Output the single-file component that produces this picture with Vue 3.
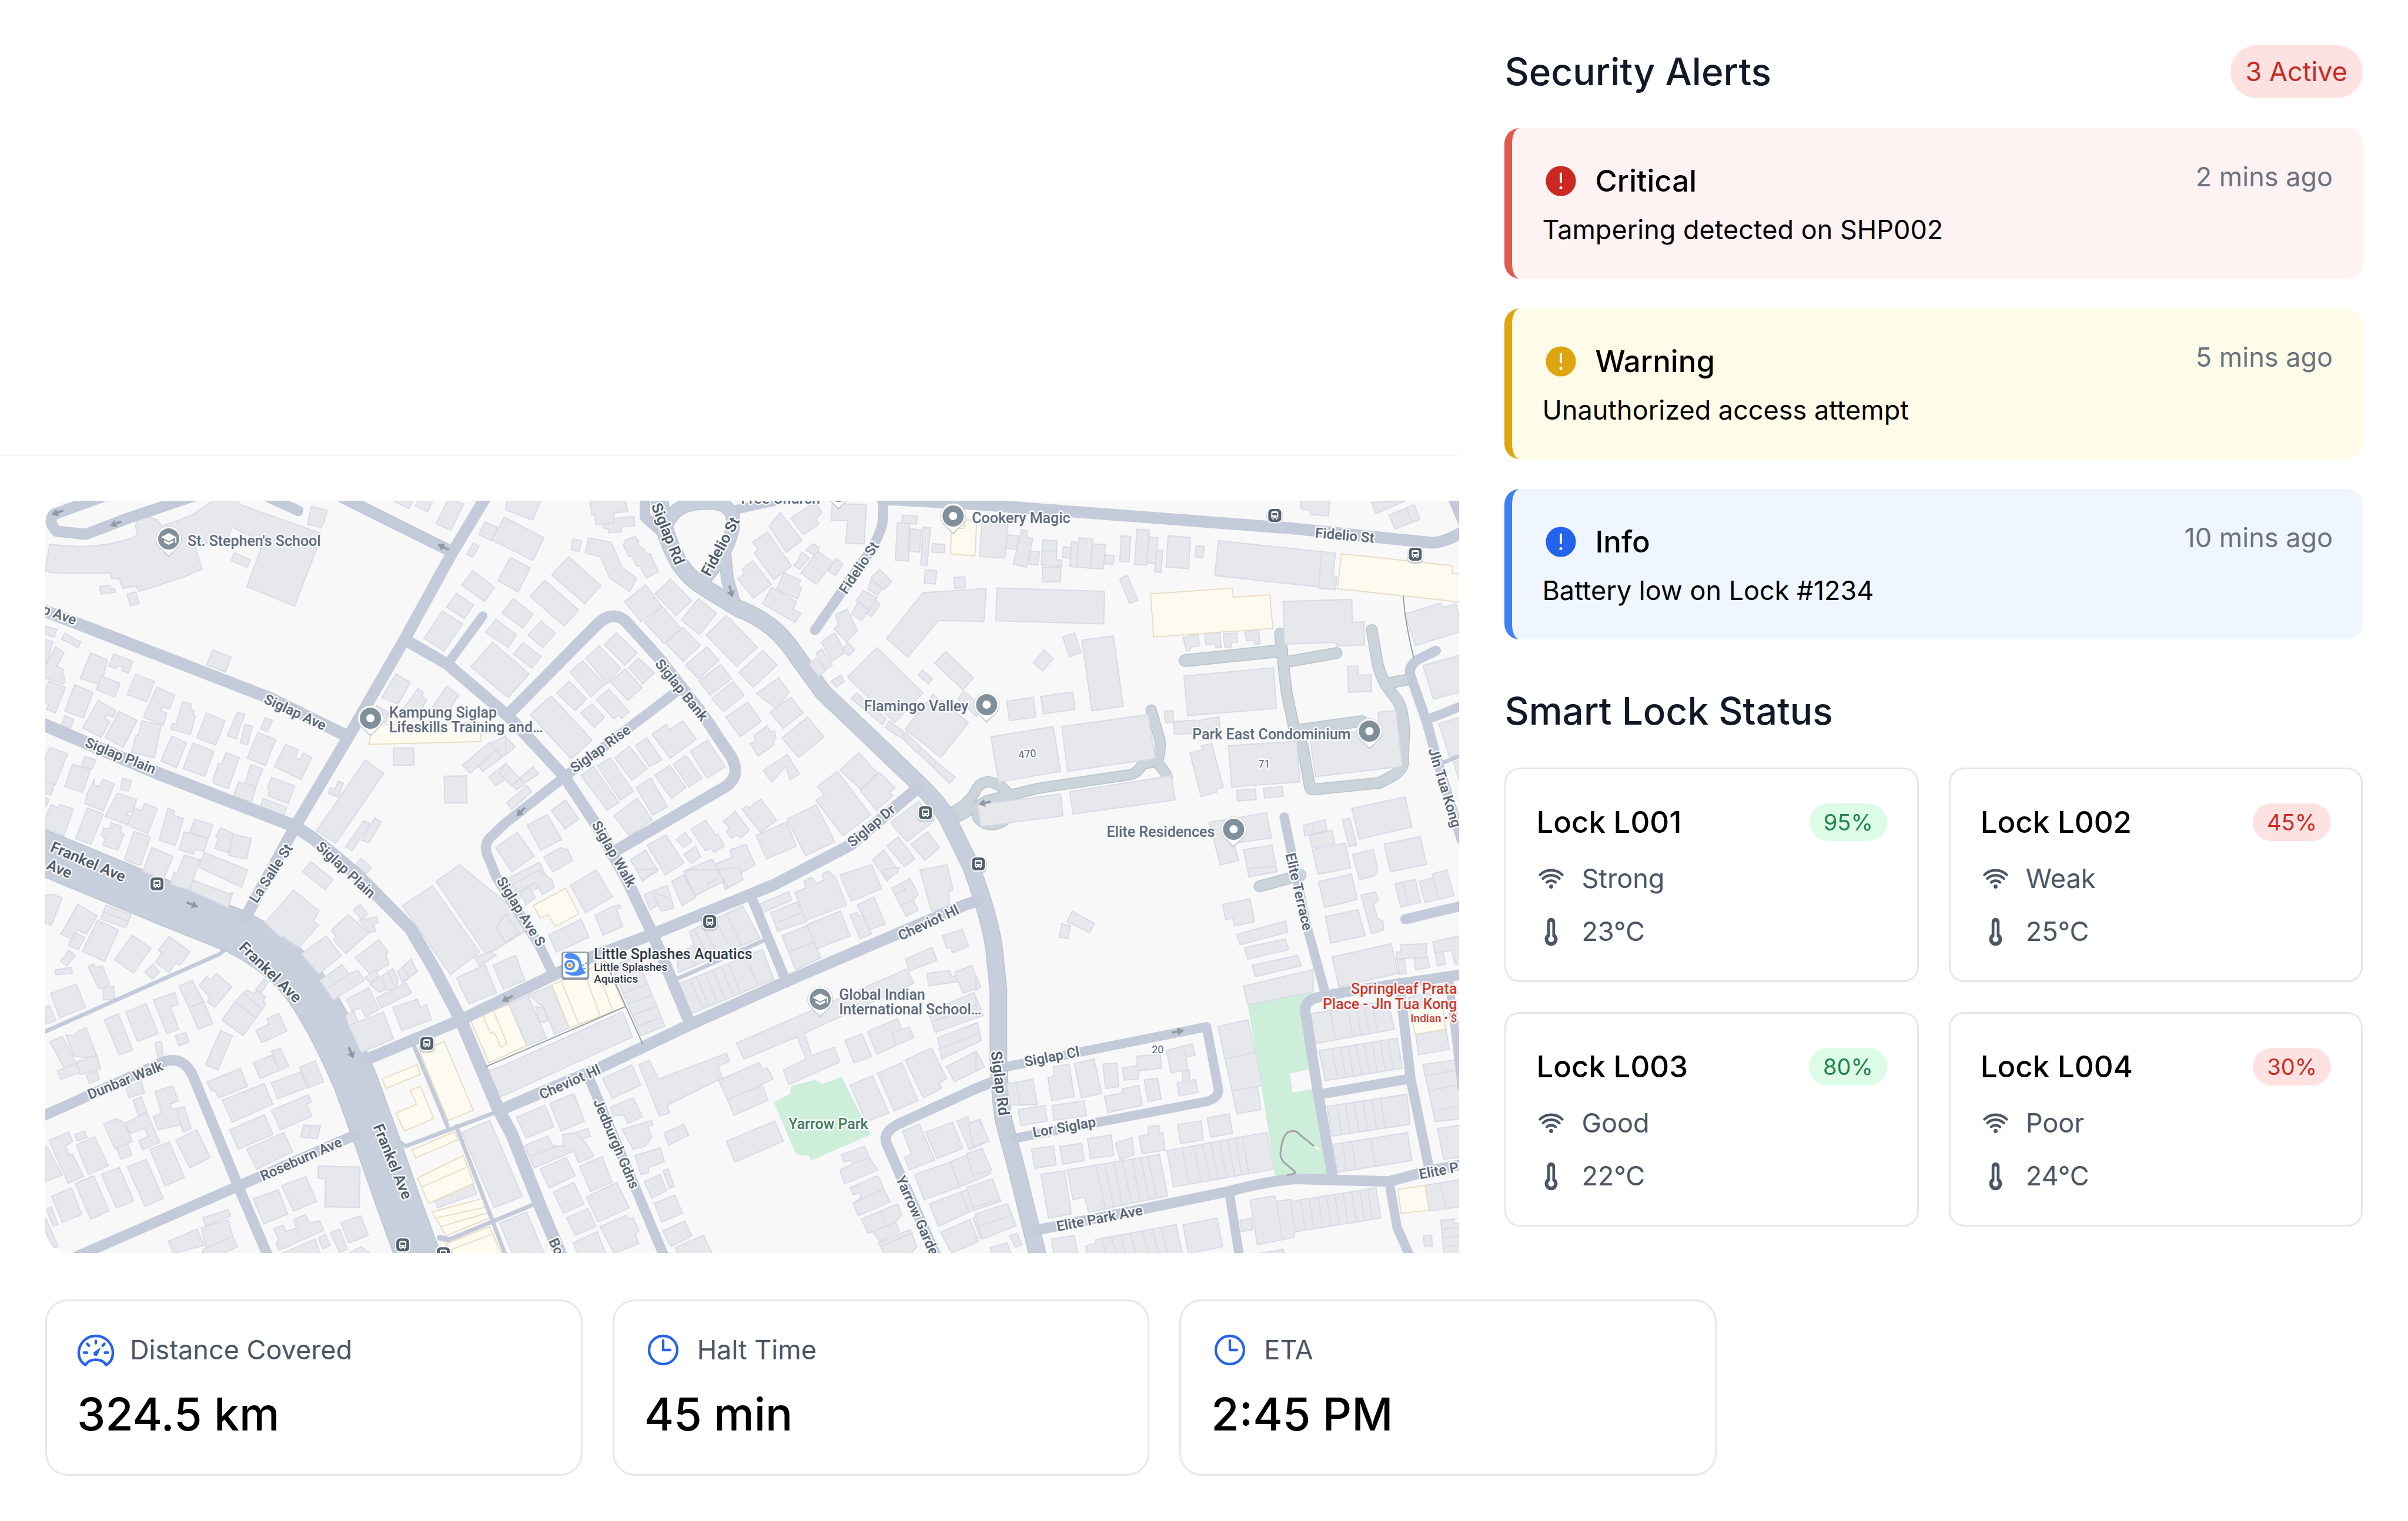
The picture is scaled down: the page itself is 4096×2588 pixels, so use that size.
<script setup>
const alerts = [
  { level: 'critical', title: 'Critical', message: 'Tampering detected on SHP002', time: '2 mins ago' },
  { level: 'warning', title: 'Warning', message: 'Unauthorized access attempt', time: '5 mins ago' },
  { level: 'info', title: 'Info', message: 'Battery low on Lock #1234', time: '10 mins ago' },
]

const locks = [
  { name: 'Lock L001', battery: 95, signal: 'Strong', temp: '23°C' },
  { name: 'Lock L002', battery: 45, signal: 'Weak', temp: '25°C' },
  { name: 'Lock L003', battery: 80, signal: 'Good', temp: '22°C' },
  { name: 'Lock L004', battery: 30, signal: 'Poor', temp: '24°C' },
]

const stats = [
  { icon: 'gauge', label: 'Distance Covered', value: '324.5 km' },
  { icon: 'clock', label: 'Halt Time', value: '45 min' },
  { icon: 'clock', label: 'ETA', value: '2:45 PM' },
]

// Footprints are stored per survey sheet; every sheet has its own 1568-unit grid.
const list = (s) => s.split(';').map((p) => p.trim()).filter(Boolean)
const sheets = [
  {
    x: 60, y: 840, w: 820, h: 660,
    blocks: list(`47,205 150,215 235,205 315,180 333,165 326,130 335,100 365,92 395,105 411,130 465,108 515,82 578,28 655,28 668,45 928,160 917,217 843,455 688,375 735,218 700,170 640,136 630,170 520,215 543,305 480,338 338,395 328,373 284,383 274,344 247,342 245,321 90,322 47,318 33,312;
209,376 243,370 246,385 258,383 261,398 213,406; 299,405 327,397 337,443 309,453; 648,239 700,267 689,298 637,270; 898,52 948,66 940,115 935,118 930,137 885,124; 578,632 638,661 618,720 557,692;
33,536 70,548 61,579 33,570; 95,564 148,600 139,621 86,588; 33,590 57,598 42,670 33,690; 66,619 94,643 70,697 92,712 88,733 96,741 92,770 33,745 33,700; 180,644 235,671 214,773 146,747; 255,647 317,678 303,726 281,715 285,702 268,694 263,707 239,696; 216,737 276,766 258,822 198,792; 326,729 387,759 363,841 299,812; 45,757 98,783 65,886 38,872 43,852 33,848 33,790; 128,773 188,803 157,906 96,878; 395,782 454,814 437,870 412,862 410,878 427,888 417,935 352,903; 205,835 263,878 254,904 231,892 226,908 243,920 214,985 154,947; 98,898 126,912 114,947 84,934; 273,880 331,917 286,1025 227,985; 347,918 410,934 387,1068 313,1045 327,978 335,977; 480,841 507,851 505,870 518,880 513,894 521,899 504,973 440,951 447,928 457,932; 557,887 617,918 587,1016 525,986; 657,882 681,893 653,991 625,978; 681,933 705,940 691,1014 667,1007; 748,905 771,917 754,963 733,951; 724,965 782,994 748,1099 689,1069; 443,980 492,1008 459,1106 408,1081; 513,1008 581,1041 551,1143 481,1111; 620,1047 663,1066 628,1192 583,1173 577,1155 597,1090 607,1092; 701,1095 740,1113 717,1186 683,1168; 662,1163 717,1186 704,1246 644,1222; 814,1014 855,1035 846,1066 861,1075 872,1049 899,1065 865,1155 777,1103; 768,1147 844,1182 822,1252 757,1222 761,1195 755,1188; 741,1232 817,1268 806,1307 730,1273;
48,1026 105,1052 65,1175 33,1162 33,1060; 33,1162 62,1175 51,1219 33,1210; 161,1062 196,1076 186,1113 151,1102; 121,1094 180,1115 154,1207 96,1184; 194,1150 190,1178 210,1183 220,1153 257,1175 221,1283 160,1252 170,1220 167,1217; 283,1151 312,1159 304,1202 277,1194; 267,1210 330,1237 316,1285 298,1287 298,1300 312,1305 300,1338 227,1305; 355,1252 397,1273 366,1374 300,1340 322,1270 345,1280; 33,1228 45,1235 33,1270; 52,1256 75,1271 79,1255 124,1275 93,1382 33,1350 33,1310; 170,1270 221,1296 181,1417 131,1393; 247,1330 281,1345 278,1370 289,1376 268,1442 220,1420 228,1395 215,1380 222,1352 241,1355; 431,1272 452,1282 449,1300 482,1313 455,1422 403,1400; 518,1315 578,1340 562,1393 503,1368; 484,1367 562,1393 549,1445 519,1437 514,1457 468,1438; 602,1350 645,1374 627,1451 583,1433 597,1391 587,1385; 645,1377 703,1393 687,1477 630,1463; 321,1365 375,1388 342,1503 290,1480; 379,1430 448,1467 415,1560 350,1525; 550,1450 690,1520 671,1590 532,1510; 485,1460 537,1480 500,1600 440,1580 452,1530 462,1530;
1163,28 1228,28 1215,60; 1247,28 1293,28 1276,72 1235,48; 1345,20 1393,42 1352,148 1303,122; 1461,115 1503,135 1485,190 1442,166; 1425,200 1443,213 1422,257 1403,243; 1422,312 1494,378 1461,435 1387,370; 1369,403 1425,450 1395,505 1338,458; 1324,474 1390,527 1329,637 1264,585; 1498,508 1565,570 1538,621 1464,560; 1487,601 1606,728 1538,824 1417,700; 1173,729 1220,763 1180,850 1127,825; 1245,788 1262,803 1257,818 1274,833 1250,880 1200,865; 1338,779 1378,813 1340,885 1292,862; 1110,855 1150,885 1140,925 1105,910;
1073,1077 1133,1130 977,1413 915,1363; 985,1162 1002,1170 985,1225 953,1212 960,1188 975,1192; 1165,1028 1230,1028 1232,1097 1166,1098; 1330,1142 1403,1140 1404,1250 1331,1250; 1477,1005 1500,1035 1414,1130 1389,1098; 1525,982 1560,1020 1518,1066 1480,1010; 1500,1035 1518,1066 1455,1122 1442,1100; 1475,1145 1530,1090 1560,1130 1497,1180; 1068,1323 1089,1333 1030,1443 1009,1425; 1104,1311 1125,1327 1085,1411 1062,1400; 895,1486 968,1560 942,1600 870,1528; 1060,1475 1094,1512 1075,1535 1042,1500; 1497,1430 1568,1370 1620,1460 1550,1527`),
    shops: list(`1095,935 1449,925 1449,1002 1085,1013`),
    walls: '',
  },
  {
    x: 860, y: 840, w: 820, h: 660,
    blocks: list(`5,28 115,28 88,107 0,65; -5,95 125,178 88,270 -45,187; 15,257 80,300 40,397 -25,352; 205,255 310,372 257,445 150,328; 127,350 237,470 190,535 80,415; 25,424 89,487 55,543 -12,482; 115,514 162,565 121,622 73,572; 57,602 115,658 86,705 25,648;
275,30 390,28 397,72 352,77 353,120 293,126 290,85 280,84; 317,124 350,120 352,100 417,92 420,130 376,135 377,153 335,158 333,143 318,140; 220,183 247,192 238,236 212,226; 269,179 343,196 378,297 426,342 403,395 339,342 308,254 259,240; 420,174 433,192 430,208 450,225 455,243 470,243 496,316 457,340 436,292 427,294 412,255 400,252 383,208 388,188; 455,368 507,455 440,517 387,437; 536,345 605,433 553,492 486,405; 510,457 570,545 515,605 451,519; 627,424 686,483 630,569 571,511; 577,541 633,613 577,678 521,604; 718,492 818,620 752,698 652,572; 655,619 693,673 627,748 584,693; 837,634 883,692 805,783 758,723; 700,690 735,748 665,814 628,757; 740,759 775,815 708,880 670,828; 888,744 922,803 879,868 815,808; 788,842 831,920 763,982 716,904; 927,822 967,885 903,948 860,884; 981,903 1035,983 953,1067 899,988; 851,938 860,962 875,960 879,990 870,998 873,1015 821,1060 795,1010 812,1002 808,975; 916,1055 955,1133 925,1156 912,1102 865,1165 838,1118;
360,562 427,643 387,694 321,611; 304,616 374,704 330,767 260,665; 432,665 484,725 445,768 400,703; 250,676 323,770 278,821 209,720; 389,708 443,784 398,835 341,760; 207,758 263,830 226,877 166,805; 336,790 402,881 378,908 367,895 353,911 294,833; 280,850 321,903 288,945 244,885; 148,817 281,996 213,1072 80,893;
576,918 620,993 535,1070 476,972 522,933 533,955; 657,996 714,1103 655,1150 600,1042; 459,987 508,1075 467,1103 422,1018; 403,1021 460,1112 410,1159 355,1067; 586,1058 638,1149 595,1185 545,1093; 533,1097 586,1188 539,1232 485,1138; 341,1067 415,1203 373,1238 298,1100; 286,1102 368,1248 330,1279 245,1140; 472,1149 526,1265 479,1300 424,1187; 428,1231 477,1318 402,1382 352,1303;
89,1104 107,1133 60,1170 47,1148; 0,1090 45,1150 20,1182 -20,1130; 0,980 30,1025 0,1055; 70,1180 84,1206 20,1275 3,1250; 45,1152 62,1175 35,1196 22,1180; 195,1238 238,1315 193,1355 148,1280; 135,1297 182,1398 114,1441 70,1340; 37,1369 93,1465 20,1527 -33,1430; 180,1429 195,1440 201,1436 217,1483 154,1529 124,1468; 110,1490 140,1568 40,1640 0,1560;
893,76 964,188 912,237 857,130; 1012,45 1028,76 1008,102 1020,122 968,165 927,98 990,48; 851,155 930,293 872,347 808,240 820,225 804,195; 803,271 864,367 806,422 755,345 777,320 769,305; 1001,202 1020,220 1007,250 975,228; 963,235 987,260 955,305 938,290 952,265; 1015,233 1065,278 1010,367 960,320; 1075,262 1097,283 1073,331 1048,312; 905,320 960,350 950,372 962,380 950,425 880,387; 865,378 946,437 934,468 960,483 941,520 835,445; 1062,40 1173,44 1166,203 1106,200 1112,110 1058,107; 1290,87 1338,90 1336,123 1288,120; 1274,117 1313,122 1310,273 1267,269; 1315,142 1351,146 1346,236 1313,232; 1357,136 1382,139 1370,292 1350,288; 1388,202 1428,206 1427,239 1386,236; 1365,307 1402,311 1397,365 1361,361; 1458,339 1493,335 1495,381 1460,383; 1216,305 1255,354 1230,388 1187,340; 1188,350 1223,385 1209,412 1177,385; 1164,392 1208,420 1185,465 1140,430; 1205,430 1218,447 1190,496 1175,485; 1145,440 1180,470 1158,513 1125,487; 1111,467 1144,555 1108,600 1068,545 1083,530 1072,490; 1070,562 1105,640 1060,678 1027,600; 1113,602 1135,630 1115,655 1095,632; 1028,628 1062,695 1040,710 1009,645; 1010,665 1040,715 1018,738 987,690; 1090,733 1101,758 1075,782 1058,757; 1357,400 1563,383 1555,516 1407,513 1307,661 1239,585; 1207,622 1357,805 1265,925 1112,741; 1431,638 1521,745 1487,793 1395,685; 1355,713 1388,747 1375,768 1341,733; 1488,798 1550,860 1530,900 1472,830; 1142,805 1237,910 1225,933 1123,828; 1390,811 1505,925 1415,1066 1299,952; 1247,918 1297,965 1285,987 1234,945; 1302,967 1350,1025 1338,1048 1287,985; 1352,1027 1402,1085 1390,1105 1338,1045; 1402,1085 1461,1145 1443,1171 1388,1103;
1149,1048 1209,1130 1155,1195 1087,1117; 1216,1127 1266,1188 1247,1210 1260,1220 1205,1280 1153,1200; 1079,1122 1186,1298 1097,1383 1009,1240 1036,1217 1014,1183; 1343,1243 1395,1320 1305,1407 1252,1330; 1010,1258 1070,1407 975,1463 915,1315; 914,1327 945,1425 848,1477 814,1382; 830,1234 881,1320 829,1369 768,1275 783,1262 790,1270; 746,1283 792,1360 767,1390 750,1380 735,1394 718,1365 728,1352 707,1325; 650,1320 684,1382 690,1375 711,1423 678,1450 667,1434 650,1443 603,1357; 584,1370 606,1406 580,1430 555,1398; 618,1425 634,1466 604,1495 579,1458; 521,1380 580,1493 519,1540 460,1420; 455,1441 495,1525 448,1561 405,1480; 781,1417 811,1500 763,1535 771,1560 715,1600 682,1497 734,1470 730,1440; 672,1477 710,1568 620,1620 580,1525; 1372,1367 1411,1430 1363,1481 1318,1417; 1277,1388 1331,1475 1297,1508 1240,1423; 1230,1440 1275,1522 1240,1565 1193,1480`),
    shops: list(`1450,140 1490,140 1495,105 1532,108 1526,252 1447,243`),
    walls: '',
  },
  {
    x: 1660, y: 840, w: 840, h: 660,
    blocks: list(`18,120 100,125 92,260 11,254; 100,166 134,171 128,226 95,220; 145,145 163,150 160,175 180,182 160,297 118,285; 173,231 201,235 196,289 168,284; 212,186 257,191 255,267 273,269 272,294 207,287; 211,296 269,298 268,357 210,356; 277,214 301,218 298,260 274,257; 303,194 326,197 320,297 298,294; 327,178 371,184 363,302 319,295; 371,203 411,206 404,305 363,301; 411,247 439,251 435,286 406,283; 461,170 491,174 485,276 456,273; 511,143 550,147 541,289 503,285; 550,174 577,178 570,284 541,280; 574,228 593,231 587,319 567,316; 610,170 680,177 675,303 603,297; 699,209 725,214 719,260 695,253; 769,190 1141,240 1133,332 1146,335 1140,388 1087,382 1088,377 758,331; 66,381 408,395 405,526 63,514; 480,331 513,430 487,443 456,345; 313,563 333,642 297,659 275,580; 336,592 436,575 467,859 368,878; 217,633 245,667 212,716 181,682; 97,839 182,823 190,903 106,917; 205,820 307,802 314,872 214,890; 272,941 547,893 568,1070 291,1122; 47,983 245,941 268,1122 72,1166; 298,1205 620,1140 632,1238 307,1295; 5,1257 268,1214 276,1302 16,1345; 657,580 705,570 709,614 681,620 679,634 668,636; 725,567 774,560 778,620 762,624 757,606 730,610; 785,567 829,563 831,599 808,603 811,619 790,621; 852,560 897,550 902,607 885,608 882,592 859,594; 975,436 1193,427 1194,520 1231,518 1233,611 1145,616 1144,601 980,608; 1179,698 1212,697 1213,734 1254,731 1256,799 1183,803; 660,737 944,704 954,868 672,897; 598,879 625,877 627,923 601,925; 628,921 698,915 700,968 630,973; 704,917 770,902 776,960 712,970; 679,1048 720,1034 715,1020 748,1010 785,1187 763,1195 765,1206 714,1224; 801,1019 1018,1001 1028,1165 812,1185; 827,1199 887,1193 889,1236 830,1242; 913,1191 972,1185 976,1223 916,1230; 1060,985 1280,950 1276,884 1333,876 1353,1102 1078,1144; 740,1328 922,1290 938,1392 818,1412 834,1482 775,1501; 849,1439 940,1420 955,1528 866,1548; 1030,28 1124,28 1118,90 1061,84 1062,66 1031,61; 1255,35 1365,28 1269,80; 1311,86 1391,45 1409,104 1330,143; 1361,487 1476,442 1482,460 1523,444 1545,555 1395,614; 1419,694 1545,650 1545,798 1452,831; 1469,930 1545,900 1545,1055 1503,1063; 1515,1085 1545,1075 1545,1200; 1193,1272 1362,1226 1384,1347 1216,1396; 1295,1417 1410,1385 1430,1498 1316,1528; 1195,1458 1262,1438 1275,1520 1265,1545 1217,1560; 1163,1318 1187,1311 1208,1420 1184,1427; 1039,1340 1108,1318 1115,1360 1044,1384; 1058,1382 1130,1360 1139,1412 1067,1431; 1068,1437 1173,1412 1188,1513 1085,1538`),
    shops: list(`554,405 813,382 817,418 933,409 942,545 564,579; 1160,243 1513,291 1511,322 1545,325 1545,439 1147,384`),
    walls: 'M1098,236 1087,380M1366,60 1384,117M1068,1330 1075,1375M212,231 257,231',
  },
  {
    x: 60, y: 1480, w: 820, h: 670,
    blocks: list(`33,100 60,98 87,113 52,220 33,212; 138,137 201,183 167,255 135,240 125,278 82,255 97,228; 130,250 161,270 140,317 107,300; 203,200 271,240 225,364 153,325; 230,140 311,178 295,230 213,196; 110,320 130,340 103,382 82,363; 65,398 118,388 120,411 66,418; 315,261 377,311 319,410 258,358; 435,265 503,325 471,380 457,370 435,408 391,367 412,330 400,320; 382,375 405,407 380,435 357,407; 172,385 190,375 196,390 218,382 243,457 207,474; 220,470 255,465 259,515 222,518; 50,492 134,455 163,548 79,589; 33,545 45,540 67,600 33,615; 225,597 270,573 317,718 273,737; 294,565 361,533 400,652 332,683; 384,518 454,488 466,535 440,547 467,635 428,652; 467,463 510,440 548,525 500,548; 500,548 548,525 577,612 530,635; 533,460 557,425 570,437 590,412 639,467 583,547 560,525 569,510; 745,435 757,447 735,490 717,475; 650,525 676,490 690,478 710,495 720,480 748,505 742,525 750,535 676,660 607,598; 792,571 818,642 736,688 717,638 760,615 753,593; 603,640 641,661 593,798 553,775; 455,660 489,647 500,686 467,700; 389,687 411,683 416,744 398,748; 48,685 88,662 133,770 93,787; 100,657 125,660 142,640 165,628 200,740 157,748 125,740; 133,765 200,740 212,790 145,815; 72,800 133,770 145,805 83,834; 165,815 200,800 208,835 175,850; 708,768 768,738 795,798 731,831; 768,722 797,710 824,782 795,798; 558,845 667,790 690,862 597,908 583,877 572,880; 768,848 862,805 887,865 788,911; 860,785 910,760 937,843 887,867; 608,917 745,851 772,933 641,1004; 768,957 888,895 898,925 882,933 900,980 797,1035; 632,1035 745,975 773,1054 660,1112; 687,1112 808,1045 837,1122 720,1192; 872,1016 928,1020 917,1070 864,1064; 295,870 345,840 355,888 305,907; 318,918 345,903 363,965 335,978; 363,965 405,1085 350,1115 337,1078 367,1062 355,1028 310,1050 290,1010; 389,882 447,860 465,920 438,932 445,955 458,950 472,1015 400,1035 383,983 410,968; 458,950 485,942 507,1030 480,1043; 222,1012 265,990 292,1010 315,1080 260,1112; 265,1105 300,1090 314,1135 278,1152; 44,1077 108,1044 122,1080 97,1100 110,1135 120,1130 157,1220 107,1248; 127,1055 160,1040 168,1065 137,1080; 133,1095 193,1063 238,1178 172,1213; 33,1105 40,1105 88,1215 33,1240; 373,1113 436,1083 485,1225 422,1258; 457,1077 525,1034 569,1145 503,1186; 300,1183 361,1153 416,1307 357,1340; 215,1213 273,1185 320,1317 264,1347; 130,1248 190,1218 240,1358 180,1390; 53,1299 118,1267 151,1372 88,1403; 37,1352 52,1343 75,1412 57,1418; 33,1385 75,1500 60,1505 33,1440; 921,1179 1056,1183 1054,1344 942,1341 944,1230 920,1228; 801,1257 880,1221 915,1320 840,1358; 709,1310 790,1273 821,1370 744,1409; 545,1385 628,1352 635,1378 553,1420; 540,1425 628,1392 642,1460 555,1505; 545,1512 642,1460 658,1500 610,1528 545,1528; 433,1478 527,1431 548,1495 450,1528; 840,1392 878,1373 892,1405 925,1397 938,1435 793,1515 784,1490 792,1470 775,1430 806,1415 815,1440 850,1425; 920,1465 944,1452 958,1495 935,1508; 960,1445 990,1430 1015,1510 990,1524; 993,1405 1058,1377 1083,1455 1020,1486; 800,1528 910,1470 925,1528; 1020,1528 1060,1500 1090,1528;
840,81 923,163 905,205 922,220 857,308 805,265 800,270 747,210; 515,42 630,95 642,90 628,150 500,80; 1056,138 1081,175 1062,197 1034,160; 1018,179 1085,250 1010,334 970,280 978,265 963,240; 1053,200 1110,186 1116,210 1100,217 1107,245 1090,250; 947,263 995,342 922,415 865,335; 1117,278 1147,325 1140,340 1150,375 1092,420 1040,350; 998,377 1020,415 1050,400 1070,440 970,517 925,440; 1107,398 1117,422 1090,450 1072,430; 1163,392 1180,435 1170,475 1130,480 1118,487 1088,455; 1178,405 1222,355 1242,405 1195,450; 1205,450 1224,490 1125,550 1110,510; 1085,470 1118,555 1075,587 1060,550 1030,560 1012,515; 1010,580 1035,562 1050,605 1020,620; 1020,620 1132,567 1165,673 1060,727; 1163,548 1242,515 1252,547 1273,537 1288,597 1192,640; 1292,63 1445,328 1350,417 1194,142; 1380,-20 1303,45 1467,340 1600,240 1600,200; 1480,325 1500,340 1445,382 1428,350; 1370,430 1463,378 1500,490 1410,533; 1489,380 1562,340 1592,440 1522,475; 1388,1045 1478,997 1584,1300 1492,1345; 1510,1407 1598,1362 1655,1528 1552,1528; 1300,1320 1420,1240 1435,1290 1310,1345`),
    shops: list(`1415,597 1540,535 1598,700 1475,768; 1250,725 1330,683 1424,957 1342,998; 1128,832 1242,776 1253,814 1140,870; 1173,968 1240,934 1220,878 1253,862 1296,990 1200,1039; 1225,1115 1365,1042 1374,1075 1237,1146; 1243,1227 1392,1138 1427,1247 1280,1328; 1290,1362 1455,1308 1480,1385 1336,1456; 1335,1490 1477,1420 1516,1528 1360,1528`),
    shopWalls: 'M1258,1262 1405,1183M1307,1385 1468,1342M1320,1420 1473,1365M1345,1515 1487,1450M1454,575 1480,650 1492,645 1515,707 1534,690 1490,562',
    walls: 'M222,168 303,205M650,525 716,588M676,490 738,555M890,1068 898,1020M940,480 1020,415M1128,428 1142,480M1145,400 1165,455M1195,385 1215,430',
  },
  {
    x: 860, y: 1480, w: 820, h: 670,
    blocks: list(`210,62 295,0 347,108 260,170; 20,60 110,0 150,40 158,70 120,98 97,50 40,88; 290,180 350,145 370,140 375,150 360,160 381,225 317,260; 140,258 245,197 271,268 165,328; 50,90 75,68 97,110 65,140; 0,175 43,250 0,290 -30,230; 450,98 525,62 535,100 547,152 507,165 495,140 470,158; 540,45 580,20 617,110 573,142; 580,10 600,0 690,0 692,35 655,55 660,75 617,103; 690,0 760,-10 772,40 722,70; 425,0 495,-5 445,45; 827,135 920,87 930,120 838,170; 862,170 950,127 980,205 885,245; 940,90 975,72 970,45 995,30 1010,55 1035,40 1030,15 1050,5 1075,35 1108,140 978,200; 1087,20 1190,-20 1223,75 1123,125; 1225,0 1280,-10 1275,10 1243,35; 1255,72 1315,35 1342,98 1325,120 1342,160 1303,185 1283,140; 1347,0 1435,-20 1455,80 1440,90 1445,145 1385,165; 1143,140 1197,108 1235,215 1185,238; 1120,180 1142,170 1150,185 1162,182 1190,255 1152,273; 898,262 980,222 1025,350 943,397; 980,218 1088,165 1120,262 1012,315; 597,245 770,143 827,272 562,408 555,340 612,300; 560,455 835,317 872,435 605,572; 1420,263 1485,237 1505,305 1453,330 1448,308 1435,312; 1300,355 1387,308 1402,360 1313,403; 1370,412 1445,400 1450,425 1465,422 1468,445 1375,462; 1460,408 1515,380 1543,465 1488,492; 750,690 1303,395 1328,450 972,650 995,740 1068,706 1087,765 920,855 903,797 977,753 948,665 775,753; 1375,565 1523,488 1553,580 1397,647; 1405,668 1535,608 1546,680 1418,753; 1433,783 1530,723 1557,785 1460,843; 1103,680 1158,653 1190,743 1133,768; 1177,643 1275,592 1287,635 1313,625 1328,668 1207,733; 1120,857 1193,820 1246,967 1173,1003; 1210,810 1288,768 1341,918 1263,960; 1300,757 1385,709 1433,830 1410,850 1418,870 1358,908; 433,775 467,758 497,833 718,730 728,762 690,783 705,828 525,937 533,967 500,980; 693,838 825,767 835,795 850,788 870,832 825,860 838,865 853,917 743,977; 315,830 410,777 440,857 347,910; 340,945 415,907 445,983 397,1010 385,975 350,980; 378,1033 475,997 479,1015 463,1022 475,1065 455,1100 415,1112; 420,1137 503,1107 516,1162 465,1185 465,1205 440,1213; 515,1048 580,1013 595,1057 530,1095; 512,1197 528,1190 548,1260 532,1268; 450,1240 503,1213 523,1277 475,1307; 483,1327 550,1295 575,1367 508,1403; 510,1437 583,1398 605,1457 538,1500; 553,1503 643,1455 672,1528 560,1528; 718,1080 875,1000 903,1080 745,1163; 35,985 128,937 157,1023 66,1068; 143,930 222,890 256,1000 180,1040; 185,1053 230,1047 265,1095 287,1140 237,1165 220,1120 92,1187 62,1098 137,1060 155,1100 188,1098; 230,1045 268,1030 275,1060 245,1072; 112,1190 197,1145 226,1217 142,1267; 240,1180 313,1142 347,1243 276,1280; 155,1283 222,1245 254,1330 188,1368; 262,1302 361,1245 402,1345 300,1402; 198,1385 268,1348 293,1420 226,1455; 307,1420 393,1375 398,1390 415,1385 433,1435 422,1450 433,1487 353,1528; 220,1485 298,1440 325,1528 235,1528; 1290,1040 1345,1012 1395,1155 1313,1195 1297,1145 1320,1130; 1366,1045 1453,1005 1487,1108 1403,1150; 1468,1000 1503,982 1510,1005 1543,993 1570,1080 1508,1115; 1330,1213 1447,1162 1475,1263 1360,1313; 1447,1162 1550,1110 1578,1210 1475,1263; 1378,1330 1480,1283 1507,1362 1407,1420; 1480,1283 1580,1235 1610,1320 1507,1362; 1415,1443 1510,1392 1538,1480 1450,1525; 1520,1385 1600,1340 1620,1430 1543,1468; 1092,1133 1168,1100 1182,1145 1210,1195 1102,1250 1087,1195 1130,1170 1125,1155 1100,1162; 1120,1265 1210,1218 1250,1322 1147,1377 1130,1327 1155,1305 1153,1285 1130,1293; 1157,1390 1275,1330 1288,1375 1268,1400 1280,1440 1215,1478 1195,1440 1178,1447; 1212,1485 1315,1432 1337,1500 1318,1528 1232,1528; 345,385 425,345 518,622 440,660; 10,535 72,500 133,670 70,700; 75,497 150,460 205,630 160,655 125,550; 98,545 125,550 137,600 112,610; -55,800 0,775 380,565 413,665 0,895 -25,905`),
    shops: list(`150,458 290,385 320,360 388,545 207,630; 90,142 195,73 238,175 162,225 137,178 112,192`),
    shopWalls: 'M182,447 237,613M265,440 306,578M298,400 347,557',
    walls: 'M612,300 640,370M614,238 662,352M640,225 690,335M680,200 733,312M717,175 768,300M590,310 615,380M600,435 640,550M620,425 660,540M648,410 688,527M673,398 712,515M700,383 740,500M725,372 762,487M782,345 820,460M385,490 460,455M395,535 472,500M410,580 488,545M425,625 503,588M885,210 965,168M920,325 1000,290M482,95 495,140M482,90 530,110M1265,98 1300,80 1283,55M1283,140 1325,120M1390,605 1540,530M1405,715 1540,650M722,915 825,862M80,1140 170,1100M1255,650 1270,695M1255,650 1287,635M1130,1327 1228,1272M1178,1447 1195,1440 1270,1400M1220,1358 1235,1405M1215,1500 1325,1445M1130,1170 1182,1145',
  },
  {
    x: 1660, y: 1480, w: 840, h: 670,
    blocks: list(`305,165 376,213 360,250 289,205; 272,215 300,222 292,273 265,268; 783,137 870,115 884,207 820,223 814,192 792,198; 863,-5 950,-15 955,5 867,27; 828,257 983,203 990,248 838,298; 852,310 982,275 992,318 863,355; 876,380 1020,340 1033,382 887,425; 849,463 1070,397 1070,485 863,538; 768,623 863,597 910,855 893,865 905,955 828,971; 245,785 295,773 312,903 240,918 228,827 248,822; 312,770 375,753 398,890 334,907; 403,773 447,769 453,863 411,871; 465,788 512,780 511,742 585,734 589,790 517,800 516,832 470,837; 604,718 687,693 696,738 667,745 672,795 619,808; 655,800 677,797 678,838 697,835 705,885 645,900 638,850 656,845; 534,836 577,829 587,912 546,922; 408,902 463,888 465,872 517,858 528,937 418,966; 97,852 180,833 194,935 110,937; 134,955 219,937 226,1000 142,1018; 241,938 343,919 351,978 247,997; 176,1111 246,1100 254,1175 187,1188; 266,1101 335,1088 343,1158 275,1172; 354,1070 429,1055 437,1137 363,1149; 442,1088 495,1066 502,1133 458,1153; 517,1062 547,1052 546,1022 581,1018 581,1047 592,1047 600,1115 527,1130; 640,1013 714,1000 721,1075 649,1090; 734,988 804,972 814,1048 745,1065; 606,1118 923,1045 946,1192 627,1262; 290,1194 582,1133 608,1298 357,1363 345,1303 308,1313; 206,1212 282,1198 302,1370 230,1387; 240,1470 312,1456 322,1528 247,1528; 348,1497 380,1487 380,1472 635,1412 655,1528 352,1528; 657,1413 765,1386 783,1500 674,1528; 838,1395 874,1389 878,1433 842,1440; 870,1315 948,1298 954,1320 998,1312 1000,1320 1270,1266 1285,1386 1010,1442 1010,1462 893,1493; 895,1528 975,1510 980,1528; 1087,47 1192,16 1210,118 1106,150; 1109,186 1213,158 1235,262 1126,292; 1222,100 1268,89 1277,120 1262,140 1275,195 1293,205 1293,240 1255,253; 1330,55 1395,38 1411,130 1348,148; 1407,47 1450,32 1450,15 1465,10 1495,0 1517,103 1425,130; 1130,347 1318,294 1340,412 1152,466; 1349,298 1431,294 1428,347 1335,355 1335,327 1349,327; 1450,287 1545,260 1545,370 1520,375 1510,320 1457,330; 1391,355 1434,347 1440,388 1396,398; 1337,360 1360,357 1366,412 1345,417; 1457,330 1482,325 1490,375 1465,383; 1060,573 1308,520 1328,635 1073,692; 1089,720 1337,670 1353,790 1108,840; 1115,942 1368,893 1378,1013 1129,1060; 1132,1093 1370,1046 1383,1157 1147,1204; 1396,657 1492,635 1502,715 1405,736; 1372,508 1440,490 1450,530 1380,545; 1418,775 1517,757 1545,920 1545,990 1458,1002; 1465,1030 1545,1015 1545,1142 1484,1152; 1423,1256 1545,1232 1545,1340 1440,1358; 1421,1457 1446,1455 1449,1497 1423,1498; 1475,1395 1520,1390 1515,1405 1545,1410 1545,1528 1485,1528 1480,1450; 0,420 15,465 0,480; 0,508 22,580 0,590; 0,720 27,785 0,800; -25,1010 10,995 42,1080 -10,1100; -30,1130 18,1110 50,1195 -10,1215; -30,1265 52,1230 76,1312 -10,1345; -3,1370 100,1329 127,1417 20,1470; 45,1505 98,1485 112,1528 50,1528; 107,1457 130,1447 145,1492 125,1503`),
    shops: list(`1378,555 1480,530 1490,635 1394,655; 1340,1272 1425,1256 1438,1355 1349,1368; 1515,500 1545,480 1545,650 1530,600`),
    walls: 'M655,1107 677,1250M690,1100 715,1243M718,1092 745,1237M745,1087 770,1232M772,1081 797,1226M799,1075 822,1221M823,1069 843,1215M846,1064 866,1210M380,1175 410,1345M408,1170 437,1342M437,1163 465,1335M465,1158 493,1328M495,1152 522,1320M523,1146 550,1313M545,1142 575,1307M1125,560 1140,675M1180,550 1196,665M1207,543 1222,658M1232,537 1250,652M1257,530 1275,645M1130,712 1148,832M1157,706 1174,826M1182,701 1198,821M1207,696 1224,816M1232,691 1250,811M1257,686 1274,806M1283,681 1300,801M1308,676 1325,796M1145,936 1160,1054M1172,931 1188,1049M1200,925 1216,1043M1228,920 1244,1038M1256,915 1272,1033M1284,910 1300,1028M1163,1087 1176,1197M1192,1082 1206,1192M1253,1070 1268,1180M1000,1320 1012,1440M1030,1314 1045,1434M1058,1308 1073,1428M1086,1303 1101,1423M1112,1298 1128,1418M1138,1293 1154,1412M1165,1287 1181,1407M1192,1282 1208,1401M1218,1277 1234,1396M1243,1272 1259,1391M954,1320 973,1475M400,1468 412,1528M430,1461 445,1528M460,1454 475,1528M490,1447 507,1528M528,1438 547,1528M560,1430 580,1528M588,1424 608,1528M793,752 885,727M815,880 895,862M657,705 668,745M126,848 142,940M1355,50 1372,142M1450,32 1468,115M1425,820 1525,797M1437,880 1532,855M1448,960 1545,938M1475,1252 1492,1345M5,1420 115,1375M1480,1430 1545,1420M1478,1465 1545,1455M1485,1500 1545,1492',
  },
]

const parks = [
  'M1316,1875 1344,1861 1345,1848 1386,1837 1399,1844 1431,1832 1481,1930 1379,1975 1375,1966 1354,1964Z',
  'M2122,1710 2233,1688 2217,1702 2212,1719 2227,1820 2194,1826 2198,1859 2232,1853 2256,1999 2169,2002 2152,1890Z',
]

const lanes = [
  { w: 22, d: 'M2016,1124 2180,1107' },
  { w: 20, d: 'M2177,1078Q2180,1110 2188,1177L2201,1240Q2216,1261 2218,1285L2228,1340Q2230,1344 2236,1343L2346,1332 2372,1318Q2384,1310 2386,1300L2388,1240Q2386,1210 2378,1194L2356,1164Q2347,1145 2343,1130L2333,1072' },
  { w: 20, d: 'M2188,1126 2273,1111M2206,1242 2316,1227M2362,1162 2396,1156' },
  { w: 19, d: 'M1958,1208 1973,1260Q1974,1280 1968,1299' },
  { w: 19, d: 'M1985,1322Q1976,1302 1965,1297L1944,1299Q1934,1316 1922,1318L1767,1341 1680,1362Q1660,1372 1624,1393' },
  { w: 19, d: 'M1714,1349Q1700,1332 1680,1330Q1664,1332 1658,1348Q1645,1370 1618,1383' },
  { w: 22, d: 'M1664,1374 1664,1390Q1680,1410 1706,1396' },
  { w: 20, d: 'M2142,1508 2212,1489' },
]

const roads = [
  { w: 21, d: 'M70,1037 457,1187 590,1252' },
  { w: 22, d: 'M70,1231 269,1316 502,1406 531,1425Q600,1478 640,1521L698,1580 740,1651 784,1736 847,1886 870,1929 917,2048 954,2136' },
  { w: 20, d: 'M825,848 771,937 688,1088 593,1253 502,1406 418,1560' },
  { w: 20, d: 'M582,846 769,939' },
  { w: 18, d: 'M457,846 507,869' },
  { w: 19, d: 'M172,846 92,875Q80,886 96,904L146,909 217,882 330,844' },
  { w: 20, d: 'M688,1088 761,1130 865,1219 959,1320 1017,1408 1066,1497 1110,1589 1174,1743' },
  { w: 16, d: 'M821,1048 761,1130' },
  { w: 20, d: 'M865,1215 1017,1061Q1043,1038 1064,1057L1121,1120 1195,1215 1245,1290Q1262,1325 1226,1343L1053,1444' },
  { w: 17, d: 'M1153,1175 965,1318 860,1400 838,1421Q822,1434 828,1452L844,1492 917,1608 941,1658' },
  { w: 20, d: 'M1558,1343 1446,1438 1315,1506 1111,1589 1001,1630 860,1698 782,1736 622,1803' },
  { w: 20, d: 'M1664,1532 1640,1540 1341,1668 1174,1743 1017,1818 847,1890' },
  { w: 17, d: 'M1278,1527 1338,1672' },
  { w: 17, d: 'M1001,1832 1129,2136' },
  { w: 18, d: 'M1690,1840 1660,1852 1529,1912Q1500,1926 1508,1946L1532,2001 1592,2136' },
  { w: 17, d: 'M1502,853 1501,890Q1498,905 1482,935L1386,1072' },
  { w: 20, d: 'M1500,849 1660,858 2196,899 2430,923Q2450,926 2486,906' },
  { w: 18, d: 'M2468,840 2490,892' },
  { w: 17, d: 'M2442,1107 2412,1122Q2394,1134 2399,1150L2426,1227 2447,1303 2486,1430' },
  { w: 16, d: 'M2428,1224 2486,1201' },
  { w: 16, d: 'M2184,1390 2222,1574 2255,1694' },
  { w: 18, d: 'M2486,1658 2303,1685 2245,1696Q2214,1702 2221,1727L2241,1856 2266,2001' },
  { w: 17, d: 'M2380,1672 2399,1835 2431,1990M2244,1862 2399,1835' },
  { w: 14, d: 'M2464,1664 2486,1850' },
  { w: 17, d: 'M2390,1564 2486,1541' },
  { w: 18, d: 'M1762,2093 1944,2057 2089,2027Q2180,2004 2215,2006L2362,2010 2426,1993 2486,1981' },
  { w: 16, d: 'M2091,2031 2108,2138' },
  { w: 16, d: 'M2363,2014 2376,2088 2398,2138' },
  { w: 16, d: 'M1711,1815 2052,1747 2072,1852Q2074,1868 2052,1874L1724,1937' },
  { w: 7, d: 'M70,1758 374,1623 386,1613' },
  { w: 18, d: 'M70,1900 269,1811Q308,1790 328,1830L405,2018 457,2140' },
  { w: 18, d: 'M604,1931 405,2018 130,2138' },
  { w: 7, d: 'M704,1779 761,1916M677,1941 690,1950 844,1892M776,1916 860,2136M761,2110 908,2049M1150,1666 1299,1600M2456,1297 2486,1285' },
  { w: 10, d: 'M748,2106 762,2109' },
]

const ramps = [
  { w: 18, d: 'M1097,846 1097,880 1126,906' },
  { w: 16, d: 'M1252,867 1340,848' },
]

const mainRoads = [
  { w: 30, d: 'M1122,840Q1122,895 1150,949Q1165,978 1195,998L1257,1036Q1310,1056 1341,1097L1399,1177 1487,1261 1566,1337Q1600,1370 1613,1396L1650,1471Q1680,1550 1690,1608L1698,1685 1698,1805Q1701,1870 1707,1907L1730,1993 1766,2140' },
  { w: 24, d: 'M1134,892Q1148,858 1190,856Q1254,850 1246,898Q1238,940 1200,983' },
  { w: 22, d: 'M1232,935 1237,985 1250,1030' },
  { w: 77, d: 'M60,1445L290,1540 400,1584Q480,1624 520,1680Q562,1740 604,1839L643,1946 677,2044 712,2140' },
]

const footways = [
  { c: '#93a3a3', w: 2, d: 'M826,1815 1063,1713M1030,1636 1093,1776M2387,1015Q2388,1050 2404,1118' },
  { c: '#a3a0ab', w: 3, d: 'M2190,1999Q2204,1997 2203,1994L2183,1977Q2176,1968 2178,1958Q2182,1927 2194,1925Q2204,1922 2210,1930L2236,1951' },
  { c: '#ffffff', w: 3, d: 'M2236,1951 2244,1955' },
]

const streets = [
  ['Siglap Ave', 502, 1212, 25], ['p Ave', 101, 1046, 20], ['Siglap Plain', 205, 1286, 22], ['Siglap Plain', 588, 1480, 43],
  ['La Salle St', 461, 1486, -57], ['Dunbar Walk', 213, 1838, -22], ['Roseburn Ave', 512, 1972, -24],
  ['Fidelio St', 1461, 966, -56], ['Siglap Bank', 1159, 1174, 51], ['Siglap Rise', 1021, 1274, -36],
  ['Siglap Walk', 1044, 1453, 60], ['Siglap Dr', 1482, 1405, -40], ['Siglap Ave S', 886, 1551, 58], ['Fidelio St', 2287, 911, 5],
  ['Jln Tua Kong', 2457, 1340, 73], ['Elite Terrace', 2209, 1517, 77], ['Siglap Cl', 1789, 1798, -11], ['Lor Siglap', 1810, 1918, -10],
  ['Elite Park Ave', 1870, 2073, -11], ['Elite P', 2447, 1992, -11], ['Cheviot Hl', 1579, 1570, -25], ['Cheviot Hl', 969, 1841, -24],
  ['Jedburgh Gdns', 1048, 1946, 67], ['Yarrow Garde', 1560, 2068, 66], ['Bo', 946, 2121, 65],
]
const avenues = [
  ['Frankel Ave', 150, 1466, 23], ['Ave', 101, 1478, 23], ['Frankel Ave', 460, 1654, 44], ['Frankel Ave', 668, 1976, 68],
  ['Siglap Rd', 1136, 908, 68], ['Fidelio St', 1225, 930, -62], ['Siglap Rd', 1701, 1843, 83],
]
const numbers = [['470', 1747, 1283, -6], ['71', 2150, 1300, 0], ['20', 1969, 1786, 0]]

const places = [
  { pin: [287, 917], kind: 'school', x: 319, y: 929, lines: ["St. Stephen's School"] },
  { pin: [630, 1222], x: 662, y: 1221, lines: ['Kampung Siglap', 'Lifeskills Training and…'] },
  { pin: [1426, 836], x: 1260, y: 857, lines: ['Free Church'] },
  { pin: [1621, 878], x: 1653, y: 890, lines: ['Cookery Magic'] },
  { pin: [1678, 1199], x: 1647, y: 1210, end: true, lines: ['Flamingo Valley'] },
  { pin: [2329, 1244], x: 2297, y: 1258, end: true, lines: ['Park East Condominium'] },
  { pin: [2098, 1411], x: 2066, y: 1424, end: true, lines: ['Elite Residences'] },
  { pin: [1395, 1700], kind: 'school', x: 1427, y: 1701, lines: ['Global Indian', 'International School…'] },
]

const stops = [[267, 1505], [726, 1776], [685, 2119], [754, 2134], [1574, 1384], [1664, 1471], [1207, 1569], [2168, 878], [2407, 944]]
const arrows = [[98, 872, 160], [197, 891, 160], [754, 931, 205], [886, 1381, 133], [1243, 1006, 76], [327, 1539, 22], [597, 1791, 68], [863, 1699, 152], [1675, 1366, 168], [2003, 1755, -10]]
</script>

<template>
  <main class="page">
    <div class="overview">
      <div class="tracking">
        <div class="blank"></div>
        <section class="map-area">
          <svg class="map" viewBox="77 852 2405 1280" preserveAspectRatio="xMinYMin slice" role="img" aria-label="Shipment location map">
            <rect x="77" y="852" width="2405" height="1280" fill="#f8f8f8" />
            <path v-for="(d, i) in parks" :key="'p' + i" :d="d" fill="#cdeed8" />
            <g class="line">
              <path v-for="(r, i) in lanes" :key="'lc' + i" :d="r.d" :stroke-width="r.w" stroke="#b6c4ce" />
              <path v-for="(r, i) in lanes" :key="'l' + i" :d="r.d" :stroke-width="r.w - 3" stroke="#cad4da" />
              <path v-for="(r, i) in ramps" :key="'rp' + i" :d="r.d" :stroke-width="r.w" stroke="#c3cad9" />
            </g>
            <g class="line">
              <path v-for="(r, i) in mainRoads" :key="'mc' + i" :d="r.d" :stroke-width="r.w" stroke="#b7c5d0" />
              <path v-for="(r, i) in mainRoads" :key="'m' + i" :d="r.d" :stroke-width="r.w - 3" stroke="#c6cfdb" />
            </g>
            <svg
              v-for="(s, i) in sheets" :key="'s' + i" class="sheet"
              :x="s.x" :y="s.y" :width="s.w" :height="s.h" viewBox="0 0 1568 1568" preserveAspectRatio="none"
            >
              <polygon v-for="(p, j) in s.blocks" :key="j" class="block" :points="p" />
              <path class="block wall" :d="s.walls" />
              <polygon v-for="(p, j) in s.shops" :key="'y' + j" class="shop" :points="p" />
              <path v-if="s.shopWalls" class="shop wall" :d="s.shopWalls" />
            </svg>
            <g class="line">
              <path v-for="(r, i) in roads" :key="'r' + i" :d="r.d" :stroke-width="r.w" stroke="#c3cad9" />
              <path v-for="(f, i) in footways" :key="'f' + i" :d="f.d" :stroke-width="f.w" :stroke="f.c" />
            </g>
            <path
              v-for="(a, i) in arrows" :key="'a' + i" d="M-10,-2H0V-7L11,0L0,7V2H-10Z" fill="#919aa3"
              :transform="`translate(${a[0]} ${a[1]}) rotate(${a[2]})`"
            />
            <text
              v-for="(t, i) in streets" :key="'t' + i" class="label street" dy="8"
              :transform="`translate(${t[1]} ${t[2]}) rotate(${t[3]})`"
            >{{ t[0] }}</text>
            <text
              v-for="(t, i) in avenues" :key="'v' + i" class="label street avenue" dy="9"
              :transform="`translate(${t[1]} ${t[2]}) rotate(${t[3]})`"
            >{{ t[0] }}</text>
            <text
              v-for="(t, i) in numbers" :key="'n' + i" class="label number" dy="6"
              :transform="`translate(${t[1]} ${t[2]}) rotate(${t[3]})`"
            >{{ t[0] }}</text>
            <g v-for="(s, i) in stops" :key="'b' + i" :transform="`translate(${s[0]} ${s[1]})`">
              <rect x="-14" y="-13" width="28" height="28" rx="9" fill="#c9ced6" />
              <rect x="-13" y="-14" width="26" height="26" rx="8" fill="#fff" />
              <rect x="-11" y="-12" width="22" height="22" rx="6" fill="#52606f" />
              <path d="M-6,-5Q-6,-8 -3,-8H3Q6,-8 6,-5V4H4V6H2V4H-2V6H-4V4H-6Z" fill="#fff" />
              <path d="M-4,-5H4V-1H-4ZM-4,1H-2V3H-4ZM2,1H4V3H2Z" fill="#52606f" />
            </g>
            <g v-for="(p, i) in places" :key="'q' + i">
              <g :transform="`translate(${p.pin[0]} ${p.pin[1]})`">
                <path d="M0,31L-13,18A22,22 0 1 1 13,18Z" fill="#c5cad1" />
                <path d="M0,28L-12,17A21,21 0 1 1 12,17Z" fill="#fff" />
                <circle r="18" fill="#80909b" />
                <g v-if="p.kind === 'school'">
                  <path d="M0,-10L13,-3L0,4L-13,-3Z M-8,2L0,6L8,2V6L0,10L-8,6Z" fill="#fff" />
                  <path d="M12,-3V7" stroke="#fff" stroke-width="2" />
                </g>
                <circle v-else r="7" fill="#fff" />
              </g>
              <text
                v-for="(l, j) in p.lines" :key="j" class="label place" :class="{ end: p.end }"
                :x="p.x" :y="p.y + j * 25"
              >{{ l }}</text>
            </g>
            <g>
              <rect x="955" y="1619" width="47" height="48" rx="5" fill="#8d99a5" />
              <rect x="958" y="1621" width="41" height="42" rx="3" fill="#fff" />
              <path d="M960,1628Q960,1621 970,1621Q986,1623 989,1640Q991,1651 997,1655Q980,1664 964,1657L960,1652Q976,1658 983,1649Q988,1636 977,1632Q964,1632 960,1628Z" fill="#4d8df5" />
              <circle cx="969" cy="1642" r="7" fill="none" stroke="#4d8df5" stroke-width="4" />
              <circle cx="969" cy="1642" r="3" fill="#f0a020" />
              <path d="M990,1642h3M995,1639h3M992,1648h4" stroke="#4d8df5" stroke-width="2" />
            </g>
            <text class="label brand" x="1010" y="1632">Little Splashes Aquatics</text>
            <text class="label brand small" x="1010" y="1652">Little Splashes</text>
            <text class="label brand small" x="1010" y="1672">Aquatics</text>
            <text class="label garden" x="1341" y="1921">Yarrow Park</text>
            <text class="label food" x="2478" y="1691">Springleaf Prata</text>
            <text class="label food" x="2478" y="1717">Place - Jln Tua Kong</text>
            <text class="label food small" x="2478" y="1739">Indian • $</text>
          </svg>
        </section>
      </div>

      <aside class="panel">
        <section class="group">
          <header class="group-head">
            <h2>Security Alerts</h2>
            <span class="count">3 Active</span>
          </header>
          <article v-for="a in alerts" :key="a.level" class="alert" :class="a.level">
            <div class="alert-body">
              <h3>
                <svg class="alert-icon" viewBox="0 0 20 20" aria-hidden="true">
                  <path fill="currentColor" d="M18 10a8 8 0 1 1-16 0 8 8 0 0 1 16 0z" />
                  <path fill="#fff" d="M10 5.500a.6.6 0 0 1 .6.600v4.400a.6.6 0 0 1-1.200 0V6.100A.6.6 0 0 1 10 5.500zm0 8.900a.8.8 0 1 0 0-1.600.8.8 0 0 0 0 1.600z" />
                </svg>
                {{ a.title }}
              </h3>
              <p>{{ a.message }}</p>
            </div>
            <time>{{ a.time }}</time>
          </article>
        </section>

        <section class="group">
          <header class="group-head"><h2>Smart Lock Status</h2></header>
          <div class="locks">
            <article v-for="l in locks" :key="l.name" class="lock">
              <header class="lock-head">
                <h3>{{ l.name }}</h3>
                <span class="battery" :class="{ low: l.battery < 50 }">{{ l.battery }}%</span>
              </header>
              <p class="reading">
                <svg class="reading-icon" viewBox="0 0 51 51" aria-hidden="true">
                  <g fill="none" stroke="currentColor" stroke-width="4.4" stroke-linecap="round">
                    <path d="M6.5 18.5A27.3 27.3 0 0 1 44.5 18.5" />
                    <path d="M11.5 25A20 20 0 0 1 39.5 25" />
                    <path d="M18 31.5A11 11 0 0 1 33 31.5" />
                  </g>
                  <circle cx="25.5" cy="38.5" r="3.4" fill="currentColor" />
                </svg>
                {{ l.signal }}
              </p>
              <p class="reading">
                <svg class="reading-icon" viewBox="0 0 51 51" aria-hidden="true">
                  <path
                    fill="currentColor" fill-rule="evenodd"
                    d="M18.8 8.5a6.7 6.7 0 0 1 13.4 0V29.5a11 11 0 1 1-13.4 0ZM23.5 10.5V33.4a5 5 0 1 0 4 0V10.5a2 2 0 0 0-4 0Z"
                  />
                </svg>
                {{ l.temp }}
              </p>
            </article>
          </div>
        </section>
      </aside>
    </div>

    <section class="stats">
      <article v-for="s in stats" :key="s.label" class="stat">
        <p class="stat-label">
          <svg v-if="s.icon === 'clock'" class="stat-icon" viewBox="0 0 24 24" aria-hidden="true">
            <path d="M12 6v6h4.5m4.5 0a9 9 0 1 1-18 0 9 9 0 0 1 18 0z" fill="none" stroke="currentColor" stroke-width="1.6" stroke-linecap="round" stroke-linejoin="round" />
          </svg>
          <svg v-else class="stat-icon" viewBox="0 0 64 64" aria-hidden="true">
            <g fill="none" stroke="currentColor" stroke-width="4.4" stroke-linecap="round" stroke-linejoin="round">
              <path d="M14.500 57.500C6.500 53 3 45 3 37A29 29 0 0 1 61 37C61 45 57.500 53 49.500 57.500C46 51.500 39 48.500 32 48.500S18 51.500 14.500 57.500Z" />
              <path d="M32 16.500v4M12 36.500h5M47.500 36.500h5M17.500 21.500l2.800 3.200M46.500 21.500l-2.800 3.200" />
            </g>
            <path d="M29 35.500L40.500 27.500L35.800 39A4 4 0 1 1 29 35.500Z" fill="currentColor" />
          </svg>
          {{ s.label }}
        </p>
        <p class="stat-value">{{ s.value }}</p>
      </article>
    </section>
  </main>
</template>

<style>
body {
  margin: 0;
  background: #fff;
}
</style>

<style scoped>
.page {
  font-family: Inter, "Liberation Sans", sans-serif;
  color: #000;
  background: #fff;
  padding-bottom: 77px;
}
h2, h3, p {
  margin: 0;
  font-weight: 400;
}
.overview {
  display: grid;
  grid-template-columns: minmax(0, 20fr) minmax(0, 13fr);
  align-items: start;
}
.blank {
  height: 775px;
  border-bottom: 1px solid #ececee;
}
.map-area {
  padding: 76px 0 0 77px;
}
.map {
  display: block;
  width: 100%;
  height: 1280px;
  border-radius: 38px 0 0 38px;
}
.sheet {
  overflow: visible;
}
.block, .shop {
  stroke-width: 2px;
  vector-effect: non-scaling-stroke;
}
.block {
  fill: #e7e8ec;
  stroke: #d8dbe7;
}
.shop {
  fill: #fdfbf0;
  stroke: #ebdcc4;
}
.wall {
  fill: none;
}
.line path {
  fill: none;
  stroke-linecap: round;
  stroke-linejoin: round;
}
.label {
  font-family: Roboto, "Liberation Sans", sans-serif;
  paint-order: stroke;
  stroke: #f8f8fa;
  stroke-width: 5px;
  stroke-linejoin: round;
}
.street {
  font-size: 24px;
  font-weight: 600;
  fill: #5a6877;
  text-anchor: middle;
}
.avenue {
  font-size: 26px;
  fill: #4f5d6c;
}
.number {
  font-size: 18px;
  fill: #5a6877;
  text-anchor: middle;
}
.place {
  font-size: 25px;
  font-weight: 500;
  fill: #5d6b7c;
}
.end, .food {
  text-anchor: end;
}
.brand {
  font-size: 25px;
  font-weight: 500;
  fill: #2f3a45;
}
.garden {
  font-size: 25px;
  font-weight: 500;
  fill: #437b60;
}
.food {
  font-size: 25px;
  font-weight: 500;
  fill: #cf3a2c;
}
.label.small {
  font-size: 19px;
}
.panel {
  display: flex;
  flex-direction: column;
  gap: 77px;
  padding: 77px;
}
.group {
  display: flex;
  flex-direction: column;
  gap: 51px;
}
.group-head {
  display: flex;
  justify-content: space-between;
  align-items: center;
}
h2 {
  font-size: 64px;
  line-height: 90px;
  font-weight: 500;
  color: #111827;
}
.count {
  padding: 13px 26px;
  border-radius: 45px;
  font-size: 45px;
  line-height: 64px;
  color: #c92a22;
  background: #fee2e2;
}
.alert {
  display: flex;
  justify-content: space-between;
  align-items: flex-start;
  padding: 51px;
  border-left: 13px solid;
  border-radius: 26px;
}
.alert-body {
  display: flex;
  flex-direction: column;
  gap: 13px;
}
.alert h3 {
  display: flex;
  align-items: center;
  gap: 26px;
  font-size: 51px;
  line-height: 77px;
  font-weight: 500;
}
.alert p, .alert time {
  font-size: 45px;
  line-height: 64px;
}
.alert time {
  color: #6b7280;
}
.alert-icon {
  width: 64px;
  height: 64px;
}
.critical {
  background: #fef2f2;
  border-color: #e15b4c;
}
.critical .alert-icon {
  color: #ca2820;
}
.warning {
  background: #fefce8;
  border-color: #dfa510;
}
.warning .alert-icon {
  color: #dfa510;
}
.info {
  background: #eff6ff;
  border-color: #3f80f3;
}
.info .alert-icon {
  color: #2463eb;
}
.locks {
  display: grid;
  grid-template-columns: repeat(2, minmax(0, 1fr));
  gap: 51px;
}
.lock {
  display: flex;
  flex-direction: column;
  gap: 26px;
  padding: 51px;
  border: 3px solid #e5e7eb;
  border-radius: 26px;
}
.lock-head {
  display: flex;
  justify-content: space-between;
  align-items: center;
}
.lock h3 {
  font-size: 51px;
  line-height: 77px;
  font-weight: 500;
}
.battery {
  padding: 6px 24px;
  border-radius: 32px;
  font-size: 38px;
  line-height: 52px;
  color: #22834b;
  background: #dcfce7;
}
.battery.low {
  color: #c92a22;
  background: #fee2e2;
}
.reading {
  display: flex;
  align-items: center;
  gap: 26px;
  font-size: 45px;
  line-height: 64px;
  color: #4b5563;
}
.reading-icon {
  width: 51px;
  height: 51px;
}
.stats {
  display: grid;
  grid-template-columns: repeat(3, minmax(0, 1fr));
  gap: 51px;
  box-sizing: border-box;
  width: 73.17%;
  padding: 47px 77px 0;
}
.stat {
  display: flex;
  flex-direction: column;
  gap: 26px;
  padding: 51px;
  border: 3px solid #e5e7eb;
  border-radius: 38px;
}
.stat-label {
  display: flex;
  align-items: center;
  gap: 26px;
  font-size: 45px;
  line-height: 64px;
  color: #4b5563;
}
.stat-icon {
  width: 64px;
  height: 64px;
  color: #2463eb;
}
.stat-value {
  font-size: 77px;
  line-height: 102px;
  font-weight: 500;
}
</style>
